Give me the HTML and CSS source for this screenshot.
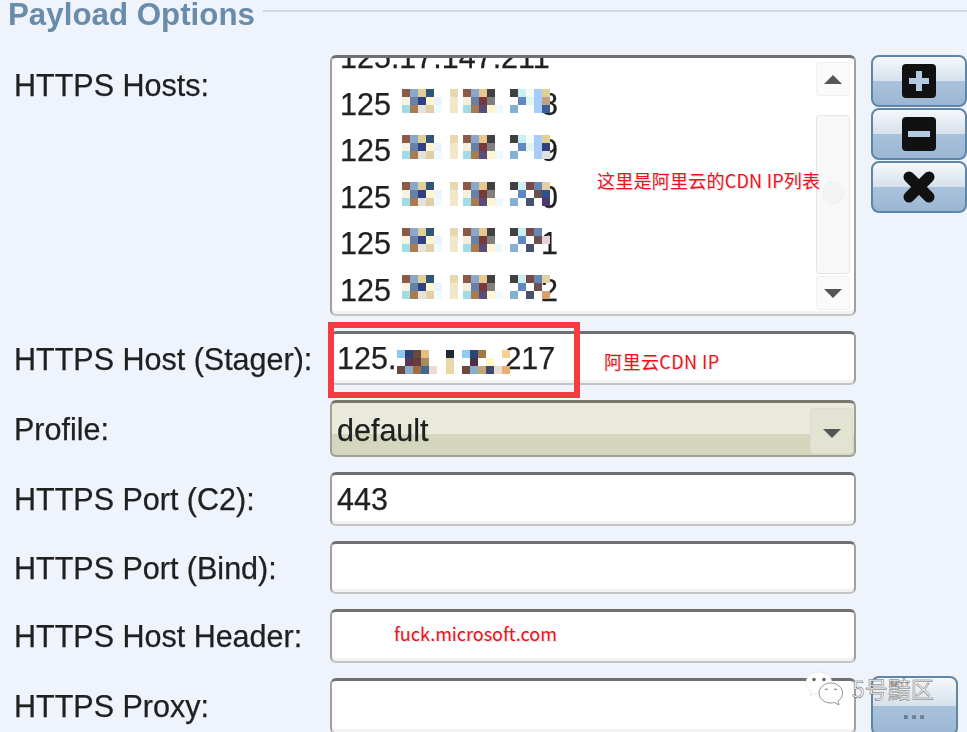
FILE: index.html
```html
<!DOCTYPE html>
<html>
<head>
    <title>Payload Options</title>
    <link rel="stylesheet" href="styles.css">
</head>
<body>
    <svg class="defs" width="0" height="0">
        <symbol id="host-head" viewBox="0 0 101 24">
            <rect x="0" y="0" width="8" height="8" fill="#8a5a46"/><rect x="8" y="0" width="8" height="8" fill="#8aa8cc"/><rect x="16" y="0" width="8" height="8" fill="#e0d098"/><rect x="24" y="0" width="8" height="8" fill="#2f5578"/>
            <rect x="0" y="8" width="8" height="8" fill="#f8f2e2"/><rect x="8" y="8" width="8" height="8" fill="#6680a8"/><rect x="16" y="8" width="8" height="8" fill="#2f3f80"/><rect x="24" y="8" width="8" height="8" fill="#fff6d0"/><rect x="32" y="8" width="8" height="8" fill="#eaf3ff"/>
            <rect x="0" y="16" width="8" height="8" fill="#a0dce8"/><rect x="8" y="16" width="8" height="8" fill="#a87c50"/><rect x="16" y="16" width="8" height="8" fill="#e4e2da"/><rect x="24" y="16" width="8" height="8" fill="#e2cfa8"/><rect x="32" y="16" width="8" height="8" fill="#f0fbff"/>
            <rect x="48" y="0" width="8" height="8" fill="#e8d8b0"/><rect x="48" y="8" width="8" height="16" fill="#f0e8c8"/>
            <rect x="61" y="0" width="8" height="8" fill="#8a5a46"/><rect x="69" y="0" width="8" height="8" fill="#8aa8cc"/><rect x="77" y="0" width="8" height="8" fill="#e8c68c"/><rect x="85" y="0" width="8" height="8" fill="#404040"/>
            <rect x="61" y="8" width="8" height="8" fill="#f4eeda"/><rect x="69" y="8" width="8" height="8" fill="#6680a8"/><rect x="77" y="8" width="8" height="8" fill="#7a3838"/><rect x="85" y="8" width="8" height="8" fill="#808080"/>
            <rect x="61" y="16" width="8" height="8" fill="#a0dce8"/><rect x="69" y="16" width="8" height="8" fill="#a87c50"/><rect x="77" y="16" width="8" height="8" fill="#584c7c"/><rect x="85" y="16" width="8" height="8" fill="#fff6d0"/><rect x="93" y="16" width="8" height="8" fill="#eef8ff"/>
        </symbol>
        <symbol id="tail-plain" viewBox="0 0 40 24">
            <rect x="0" y="0" width="8" height="8" fill="#404040"/><rect x="8" y="0" width="8" height="8" fill="#c8f0f4"/><rect x="16" y="0" width="8" height="8" fill="#f4fbf8"/><rect x="24" y="0" width="8" height="24" fill="#a8ccf8"/><rect x="32" y="0" width="8" height="8" fill="#e0d098"/>
            <rect x="0" y="8" width="8" height="8" fill="#fff"/><rect x="8" y="8" width="8" height="8" fill="#6088c0"/><rect x="16" y="8" width="8" height="8" fill="#e0f4f0"/>
            <rect x="0" y="16" width="8" height="8" fill="#84b0d4"/><rect x="8" y="16" width="16" height="8" fill="#fff"/>
        </symbol>
        <symbol id="tail-dark" viewBox="0 0 40 24">
            <rect x="0" y="0" width="8" height="8" fill="#404040"/><rect x="8" y="0" width="8" height="8" fill="#c8f0f4"/><rect x="16" y="0" width="8" height="8" fill="#7a4848"/><rect x="24" y="0" width="8" height="8" fill="#6888b0"/>
            <rect x="0" y="8" width="8" height="8" fill="#fff"/><rect x="8" y="8" width="8" height="8" fill="#6088c0"/><rect x="16" y="8" width="8" height="8" fill="#fff"/><rect x="24" y="8" width="8" height="8" fill="#6a5050"/>
            <rect x="0" y="16" width="8" height="8" fill="#84b0d4"/><rect x="8" y="16" width="8" height="8" fill="#fff"/><rect x="16" y="16" width="8" height="8" fill="#485070"/><rect x="24" y="16" width="8" height="8" fill="#fff"/>
        </symbol>
    </svg>

    <div class="page">
        <div class="form-wrap">
            <div class="legend">
                <span class="legend-text">Payload Options</span>
                <span class="legend-line"></span>
            </div>

            <div class="form">
                <label class="label label-top">HTTPS Hosts:</label>
                <div class="field listbox">
                    <ul class="hosts">
                        <li class="host"><span>125.17.147.211</span></li>
                        <li class="host">
                            <span>125</span>
                            <svg class="mosaic" width="148" height="24">
                                <use href="#host-head" width="101" height="24"/>
                                <use href="#tail-plain" x="108" width="40" height="24"/>
                                <rect x="140" y="8" width="8" height="8" fill="#c0a088"/><rect x="140" y="16" width="8" height="8" fill="#3c5c98"/>
                            </svg>
                            <span class="tail">8</span>
                        </li>
                        <li class="host">
                            <span>125</span>
                            <svg class="mosaic" width="148" height="24">
                                <use href="#host-head" width="101" height="24"/>
                                <use href="#tail-plain" x="108" width="40" height="24"/>
                                <rect x="140" y="8" width="8" height="8" fill="#2f3f80"/><rect x="140" y="16" width="8" height="8" fill="#e0e0dc"/>
                            </svg>
                            <span class="tail">9</span>
                        </li>
                        <li class="host">
                            <span>125</span>
                            <svg class="mosaic" width="148" height="24">
                                <use href="#host-head" width="101" height="24"/>
                                <use href="#tail-dark" x="108" width="40" height="24"/>
                                <rect x="140" y="0" width="8" height="8" fill="#e0d0a8"/><rect x="140" y="8" width="8" height="8" fill="#2f5090"/><rect x="140" y="16" width="8" height="8" fill="#50386c"/>
                            </svg>
                            <span class="tail">0</span>
                        </li>
                        <li class="host">
                            <span>125</span>
                            <svg class="mosaic" width="148" height="24">
                                <use href="#host-head" width="101" height="24"/>
                                <use href="#tail-dark" x="108" width="40" height="24"/>
                                <rect x="140" y="8" width="8" height="8" fill="#eccfd0"/>
                            </svg>
                            <span class="tail">1</span>
                        </li>
                        <li class="host">
                            <span>125</span>
                            <svg class="mosaic" width="148" height="24">
                                <use href="#host-head" width="101" height="24"/>
                                <use href="#tail-dark" x="108" width="40" height="24"/>
                                <rect x="140" y="0" width="8" height="8" fill="#e0d0a8"/><rect x="140" y="16" width="8" height="8" fill="#d8a070"/>
                            </svg>
                            <span class="tail">2</span>
                        </li>
                    </ul>
                    <div class="scrollbar">
                        <div class="scroll-btn"><span class="arrow-up"></span></div>
                        <div class="scroll-thumb"><span class="scroll-grip"></span></div>
                        <div class="scroll-btn"><span class="arrow-down"></span></div>
                    </div>
                </div>
                <div class="side-buttons">
                    <button class="tool-btn" type="button">
                        <svg width="34" height="34" viewBox="0 0 34 34"><rect width="34" height="34" rx="4" fill="#111"/><path d="M14 7h6v7h7v6h-7v7h-6v-7H7v-6h7z" fill="#b4cae0"/></svg>
                    </button>
                    <button class="tool-btn" type="button">
                        <svg width="34" height="34" viewBox="0 0 34 34"><rect width="34" height="34" rx="4" fill="#111"/><rect x="6" y="14" width="22" height="6" fill="#b4cae0"/></svg>
                    </button>
                    <button class="tool-btn" type="button">
                        <svg width="34" height="34" viewBox="0 0 34 34"><path d="M7 7l20 20M27 7L7 27" fill="none" stroke="#111" stroke-width="11" stroke-linecap="round"/></svg>
                    </button>
                </div>

                <label class="label">HTTPS Host (Stager):</label>
                <div class="field input">
                    <span>125.</span>
                    <svg class="mosaic-stager" width="113" height="24">
                        <rect x="0" y="0" width="8" height="8" fill="#8cc8f0"/><rect x="8" y="0" width="8" height="8" fill="#2c4478"/><rect x="16" y="0" width="8" height="8" fill="#6a4840"/><rect x="24" y="0" width="8" height="8" fill="#e4c080"/>
                        <rect x="0" y="8" width="8" height="8" fill="#fff"/><rect x="8" y="8" width="8" height="8" fill="#5c3850"/><rect x="16" y="8" width="8" height="8" fill="#6a3c3c"/><rect x="24" y="8" width="8" height="8" fill="#a88c60"/>
                        <rect x="0" y="16" width="8" height="8" fill="#6c4840"/><rect x="8" y="16" width="8" height="8" fill="#88aecc"/><rect x="16" y="16" width="8" height="8" fill="#a06c40"/><rect x="24" y="16" width="8" height="8" fill="#40688c"/><rect x="32" y="16" width="8" height="8" fill="#eadcd0"/>
                        <rect x="49" y="0" width="8" height="8" fill="#202830"/><rect x="49" y="8" width="8" height="16" fill="#e8d8a8"/>
                        <rect x="65" y="0" width="8" height="8" fill="#90ccf0"/><rect x="73" y="0" width="8" height="8" fill="#2c4478"/><rect x="81" y="0" width="8" height="8" fill="#a07848"/><rect x="105" y="0" width="8" height="8" fill="#f8d090"/>
                        <rect x="73" y="8" width="8" height="8" fill="#503040"/><rect x="89" y="8" width="8" height="8" fill="#fff8c0"/>
                        <rect x="65" y="16" width="8" height="8" fill="#6c4840"/><rect x="73" y="16" width="8" height="8" fill="#88aecc"/><rect x="81" y="16" width="8" height="8" fill="#c0a870"/><rect x="89" y="16" width="8" height="8" fill="#404870"/><rect x="97" y="16" width="8" height="8" fill="#eadcd0"/><rect x="105" y="16" width="8" height="8" fill="#e8b070"/>
                    </svg>
                    <span class="stager-tail">217</span>
                </div>
                <div></div>

                <label class="label">Profile:</label>
                <div class="field combo">
                    <span class="combo-text">default</span>
                    <div class="combo-btn"><span class="arrow-down"></span></div>
                </div>
                <div></div>

                <label class="label">HTTPS Port (C2):</label>
                <div class="field input"><span>443</span></div>
                <div></div>

                <label class="label">HTTPS Port (Bind):</label>
                <div class="field input"></div>
                <div></div>

                <label class="label">HTTPS Host Header:</label>
                <div class="field input"></div>
                <div></div>

                <label class="label">HTTPS Proxy:</label>
                <div class="field input"></div>
                <button class="browse-btn" type="button">...</button>
            </div>
        </div>

        <div class="red-box"></div>
        <span class="note note-list">这里是阿里云的CDN IP列表</span>
        <span class="note note-stager">阿里云CDN IP</span>
        <span class="note note-header">fuck.microsoft.com</span>

        <div class="watermark">
            <svg width="40" height="36" viewBox="0 0 40 36">
                <path d="M14 2C6.800 2 1 6.800 1 13c0 3.600 2 6.600 5 8.700L5 26l5-2.600c1.300.4 2.700.6 4 .6 7.200 0 13-5 13-11S21.200 2 14 2z" fill="#fff" stroke="#ddd" stroke-width=".6"/>
                <circle cx="9" cy="9.500" r="1.800" fill="#666"/><circle cx="19" cy="9.500" r="1.800" fill="#666"/>
                <path d="M26 13c-6.600 0-12 4.400-12 10s5.400 10 12 10c1.200 0 2.400-.2 3.500-.5l4.500 2.500-1-3.800c2.800-1.900 4.500-5 4.500-8.200 0-5.600-5.400-10-11.500-10z" fill="#fff" stroke="#777" stroke-width=".8"/>
                <path d="M20 20a1.600 1.600 0 0 1 3 0M29 20a1.600 1.600 0 0 1 3 0" fill="none" stroke="#666" stroke-width="1"/>
            </svg>
            <span class="watermark-text">5号黯区</span>
        </div>
    </div>
</body>
</html>
```

FILE: styles.css
```css
body {
    margin: 0;
    background-color: #eff3fb;
    font-family: "Liberation Sans", Arial, sans-serif;
}

.defs {
    position: absolute;
}

.page {
    position: relative;
    width: 967px;
    height: 732px;
    overflow: hidden;
}

.form-wrap {
    filter: blur(0.5px);
}

.legend {
    display: flex;
    align-items: flex-start;
    height: 55px;
    padding-left: 8px;
}

.legend-text {
    font-size: 31.3px;
    font-weight: bold;
    line-height: 30px;
    color: #6a8cab;
}

.legend-line {
    flex: 1;
    height: 2px;
    margin: 10px 0 0 8px;
    background-color: #ced7e7;
}

.form {
    display: grid;
    grid-template-columns: 301px 526px 96px;
    grid-template-rows: 261px 54px 57px 53.5px 53.5px 53.5px 56px;
    column-gap: 15px;
    row-gap: 15px;
    padding-left: 14px;
}

.label {
    align-self: center;
    padding-top: 2px;
    font-size: 30.5px;
    color: #202020;
    white-space: nowrap;
    -webkit-text-stroke: 0.25px #202020;
}

.label-top {
    align-self: start;
    margin-top: 11px;
}

.field {
    box-sizing: border-box;
    display: flex;
    align-items: center;
    border: 2px solid #a0a0a0;
    border-top: 3px solid #707070;
    border-bottom-color: #c4c4c4;
    border-radius: 6px;
    background-color: #fff;
    box-shadow: inset 0 -3px 0 #f2f2f2;
    font-size: 30.5px;
    color: #202020;
    -webkit-text-stroke: 0.25px #202020;
    overflow: hidden;
}

.input {
    padding-left: 5px;
}

.listbox {
    align-items: flex-start;
    justify-content: space-between;
}

.hosts {
    flex: 1;
    list-style: none;
    margin: -24px 0 0;
    padding: 0 0 0 8px;
}

.host {
    display: flex;
    align-items: flex-start;
    height: 46.5px;
    line-height: 46.5px;
    white-space: nowrap;
}

.mosaic {
    position: relative;
    z-index: 1;
    flex: none;
    margin: 8px 0 0 11px;
}

.tail {
    margin-left: -9px;
}

.scrollbar {
    display: flex;
    flex-direction: column;
    width: 34px;
    height: 248px;
    margin: 4px 4px 0 0;
    gap: 19px;
}

.scroll-btn {
    display: flex;
    align-items: center;
    justify-content: center;
    height: 32px;
    flex: none;
    border: 1px solid #f0f0f0;
    border-radius: 3px;
    background-color: #fafafa;
}

.scroll-btn:last-child {
    margin-top: -17px;
}

.scroll-thumb {
    display: flex;
    align-items: center;
    justify-content: center;
    flex: 1;
    padding-bottom: 4px;
    border: 1px solid #e6e6e6;
    border-radius: 3px;
    background-color: #f8f8f8;
}

.scroll-grip {
    width: 20px;
    height: 20px;
    border-radius: 50%;
    background-color: #f4f4f4;
    border: 1px solid #efefef;
}

.arrow-up {
    width: 0;
    height: 0;
    border-left: 9px solid transparent;
    border-right: 9px solid transparent;
    border-bottom: 9px solid #555;
}

.arrow-down {
    width: 0;
    height: 0;
    border-left: 9px solid transparent;
    border-right: 9px solid transparent;
    border-top: 9px solid #555;
}

.mosaic-stager {
    flex: none;
    position: relative;
    z-index: 1;
    margin-left: 1px;
    margin-top: 7px;
}

.stager-tail {
    margin-left: -6px;
}

.combo {
    justify-content: space-between;
    padding-left: 5px;
    border-color: #a0a090;
    border-top-color: #76766a;
    box-shadow: none;
    background: linear-gradient(to bottom, #e9eadc 0, #e9eadc 60%, #d4d7bd 60%, #d4d7bd 100%);
}

.combo-text {
    padding-top: 2px;
}

.combo-btn {
    display: flex;
    align-items: center;
    justify-content: center;
    width: 43px;
    height: 46px;
    margin: 4px 1px 0 0;
    padding-top: 4px;
    box-sizing: border-box;
    border: 1px solid #dcddcc;
    border-radius: 3px;
    background: #e2e3d3;
}

.side-buttons {
    display: flex;
    flex-direction: column;
    gap: 1px;
}

.tool-btn,
.browse-btn {
    box-sizing: border-box;
    display: flex;
    align-items: center;
    justify-content: center;
    padding: 0;
    border: 2px solid #5f86a8;
    border-radius: 8px;
    background: linear-gradient(to bottom, #f6f8fb 0, #d6e1eb 50%, #a9c2dc 50%, #9cb7d3 100%);
}

.tool-btn {
    height: 52px;
}

.browse-btn {
    width: 87px;
    height: 60px;
    margin-top: -2px;
    padding-top: 8px;
    font-family: "Liberation Sans", Arial, sans-serif;
    font-size: 26px;
    font-weight: bold;
    line-height: 1;
    letter-spacing: 1px;
    color: #6f7a88;
}

/* things drawn on top of the screenshot */
.red-box {
    position: absolute;
    left: 328px;
    top: 322px;
    box-sizing: border-box;
    width: 252px;
    height: 76px;
    border: 6px solid #f53c40;
}

.note {
    position: absolute;
    font-family: "Noto Sans CJK SC", "Noto Sans", sans-serif;
    font-size: 18px;
    line-height: 24px;
    color: #f01020;
    white-space: nowrap;
    text-shadow: 1px 1px 0 #ddd;
}

.note-list {
    left: 597px;
    top: 168px;
    letter-spacing: 0.25px;
}

.note-stager {
    left: 604px;
    top: 349px;
    letter-spacing: 0.45px;
}

.note-header {
    left: 394px;
    top: 621px;
}

.watermark {
    position: absolute;
    left: 805px;
    top: 670px;
    display: flex;
    align-items: center;
    gap: 7px;
}

.watermark-text {
    font-family: "Noto Sans CJK SC", sans-serif;
    font-size: 23px;
    color: #fff;
    white-space: nowrap;
    -webkit-text-stroke: 0.5px #666;
}
```
